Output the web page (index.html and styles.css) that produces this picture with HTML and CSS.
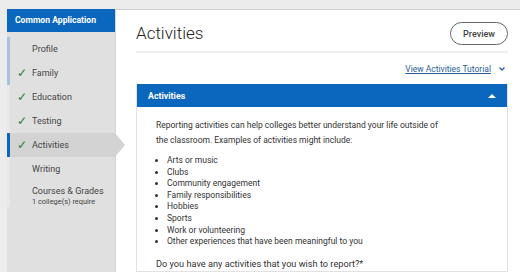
FILE: index.html
```html
<!DOCTYPE html>
<html lang="en">
  <head>
    <meta charset="UTF-8" />
    <title>Activities</title>
    <link rel="stylesheet" href="styles.css">
  </head>
  <body>
    <div class="page">
      <div class="sidebar">
        <div class="side-head">Common Application</div>
        <ul class="nav">
          <li class="done-bar">Profile</li>
          <li class="done-bar"><span class="check">&#10003;</span>Family</li>
          <li><span class="check">&#10003;</span>Education</li>
          <li><span class="check">&#10003;</span>Testing</li>
          <li class="active"><span class="check">&#10003;</span>Activities</li>
          <li>Writing</li>
          <li class="two-line">Courses &amp; Grades<small>1 college(s) require</small></li>
        </ul>
      </div>

      <div class="main">
        <div class="title-row">
          <h1>Activities</h1>
          <button class="preview">Preview</button>
        </div>
        <div class="tutorial">
          <a href="#">View Activities Tutorial</a>
          <svg width="8" height="6" viewBox="0 0 8 6"><path d="M1.5 1.5 L4 4 L6.5 1.5" fill="none" stroke="#2b5d9a" stroke-width="1.3"/></svg>
        </div>
        <div class="card">
          <div class="card-head">
            <span>Activities</span>
            <span class="caret"></span>
          </div>
          <div class="card-body">
            <p>Reporting activities can help colleges better understand your life outside of the classroom. Examples of activities might include:</p>
            <ul>
              <li>Arts or music</li>
              <li>Clubs</li>
              <li>Community engagement</li>
              <li>Family responsibilities</li>
              <li>Hobbies</li>
              <li>Sports</li>
              <li>Work or volunteering</li>
              <li>Other experiences that have been meaningful to you</li>
            </ul>
            <p class="question">Do you have any activities that you wish to report?*</p>
          </div>
        </div>
      </div>
    </div>
  </body>
</html>
```

FILE: styles.css
```css
* {
  margin: 0;
  padding: 0;
  box-sizing: border-box;
}
body {
  background-color: #ececec;
  font-family: Roboto, "Liberation Sans", sans-serif;
  color: #333;
  overflow: hidden;
}
.page {
  display: flex;
  height: 272px;
  padding: 9px 0 0 7px;
}
.sidebar {
  width: 109px;
  flex-shrink: 0;
  display: flex;
  flex-direction: column;
  background-color: #e0e0e0;
  border-right: 1px solid #d6d6d6;
}
.side-head {
  height: 23px;
  line-height: 23px;
  padding-left: 8px;
  background-color: #0b66bd;
  color: #fff;
  font-size: 8.6px;
  font-weight: bold;
}
.nav {
  list-style: none;
  padding-top: 5px;
}
.nav li {
  position: relative;
  height: 24px;
  line-height: 24px;
  padding-left: 22px;
  font-size: 9px;
  color: #444;
  border-left: 3px solid #e8e8e8;
}
.nav li.done-bar {
  border-left-color: #a8c2df;
}
.nav li.active {
  background-color: #d3d3d3;
  border-left-color: #0b66bd;
}
.nav li.active::after {
  content: "";
  position: absolute;
  right: -10px;
  top: 0;
  border-top: 12px solid transparent;
  border-bottom: 12px solid transparent;
  border-left: 10px solid #d3d3d3;
}
.check {
  position: absolute;
  left: 7px;
  color: #2e7d32;
  font-size: 12px;
}
.nav li.two-line {
  height: auto;
  line-height: 11px;
  padding-top: 5px;
}
.nav li small {
  display: block;
  font-size: 7.4px;
  line-height: 10px;
}
.main {
  flex: 1;
  background-color: #fff;
  border-top: 1px solid #cfcfcf;
  padding: 0 12px 0 20px;
}
.title-row {
  display: flex;
  justify-content: space-between;
  align-items: center;
  height: 43px;
  border-bottom: 2px solid #eee;
}
h1 {
  font-size: 17px;
  font-weight: 300;
  color: #222;
  padding-top: 4px;
}
.preview {
  width: 58px;
  height: 23px;
  margin-top: 6px;
  border: 1.5px solid #666;
  border-radius: 12px;
  background-color: #fff;
  font-family: Roboto, "Liberation Sans", sans-serif;
  font-size: 9px;
  font-weight: 500;
  color: #444;
}
.tutorial {
  display: flex;
  justify-content: flex-end;
  align-items: center;
  gap: 7px;
  height: 31px;
  padding-right: 2px;
  font-size: 8.5px;
}
.tutorial a {
  color: #2b5d9a;
}
.card {
  border: 1px solid #e2e2e2;
  border-top: none;
}
.card-head {
  display: flex;
  justify-content: space-between;
  align-items: center;
  height: 23px;
  padding: 0 11px;
  background-color: #0b66bd;
  color: #fff;
  font-size: 8.8px;
  font-weight: bold;
}
.caret {
  border-left: 4px solid transparent;
  border-right: 4px solid transparent;
  border-bottom: 4px solid #fff;
}
.card-body {
  padding: 11px 20px 0 19px;
  font-size: 8.5px;
  color: #333;
}
.card-body p {
  line-height: 15px;
  width: 286px;
}
.card-body ul {
  list-style: disc;
  margin: 7px 0 8px 11px;
  line-height: 11.6px;
}
.card-body p.question {
  font-size: 9.2px;
  width: auto;
}
```
